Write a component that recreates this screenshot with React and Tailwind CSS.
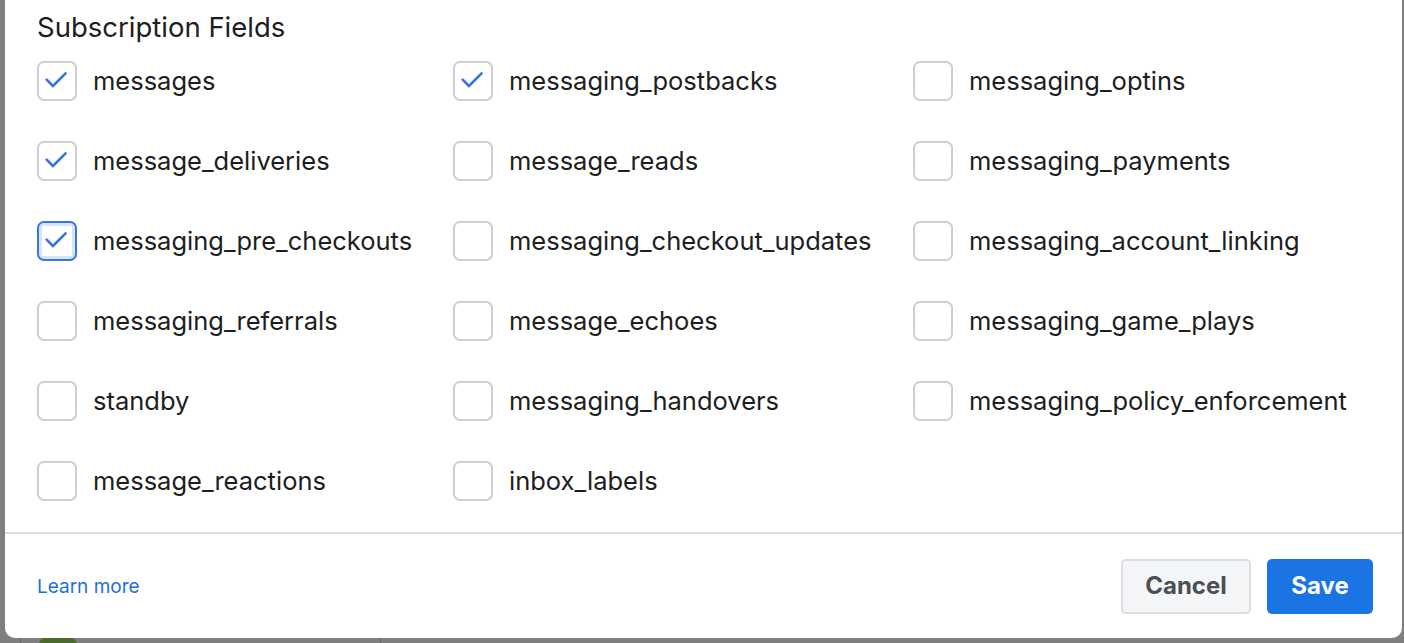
import React from 'react'

const rows = [
  [['messages', true], ['messaging_postbacks', true], ['messaging_optins', false]],
  [['message_deliveries', true], ['message_reads', false], ['messaging_payments', false]],
  [['messaging_pre_checkouts', true, true], ['messaging_checkout_updates', false], ['messaging_account_linking', false]],
  [['messaging_referrals', false], ['message_echoes', false], ['messaging_game_plays', false]],
  [['standby', false], ['messaging_handovers', false], ['messaging_policy_enforcement', false]],
  [['message_reactions', false], ['inbox_labels', false], null],
]

function Check({ checked, focused }) {
  return (
    <div
      className={
        'w-[40px] h-[40px] shrink-0 rounded-[7px] border-2 bg-white flex items-center justify-center ' +
        (focused ? 'border-[#3578e5] shadow-[inset_0_0_0_3px_#d8e4f8]' : 'border-[#ccd0d5]')
      }
    >
      {checked && (
        <svg width="40" height="40" viewBox="0 0 40 40" fill="none">
          <path d="M8.5 18.5 L15.5 25.5 L29.5 11.5" stroke="#3578e5" strokeWidth="3" strokeLinecap="round" strokeLinejoin="round" />
        </svg>
      )}
    </div>
  )
}

export default function App() {
  return (
    <div className="w-[1404px] h-[643px] bg-[#7f7f7f] overflow-hidden flex flex-col" style={{ fontFamily: 'Inter, "Liberation Sans", sans-serif' }}>
      <div className="ml-[5px] w-[1397px] h-[638px] shrink-0 bg-white rounded-b-[10px] flex flex-col">
        <div className="pl-[32px] pt-[9px]">
          <div className="text-[27.5px] leading-[36px] text-[#1c1e21]">Subscription Fields</div>
          <div className="grid grid-cols-[416px_460px_auto] gap-y-[40px] mt-[16px]">
            {rows.map((row, i) =>
              row.map((cell, j) =>
                cell ? (
                  <div key={i + '-' + j} className="flex items-center gap-[16px] h-[40px]">
                    <Check checked={cell[1]} focused={cell[2]} />
                    <span className="text-[25.5px] text-[#1c1e21] whitespace-nowrap">{cell[0]}</span>
                  </div>
                ) : (
                  <div key={i + '-' + j} />
                )
              )
            )}
          </div>
        </div>
        <div className="mt-auto border-t-2 border-[#dadde1] h-[106px] flex items-center justify-between pl-[32px] pr-[29px]">
          <a className="text-[19px] text-[#216fdb] mt-[2px]">Learn more</a>
          <div className="flex gap-[16px]">
            <button className="h-[55px] w-[130px] rounded-[5px] border-2 border-[#dadde1] bg-[#f5f6f7] text-[24px] font-bold text-[#4b4f56]">Cancel</button>
            <button className="h-[55px] w-[106px] rounded-[5px] bg-[#1b74e4] text-[24px] font-bold text-white">Save</button>
          </div>
        </div>
      </div>
      <div className="h-[5px] overflow-hidden flex">
        <div className="flex items-center w-[360px] border-l border-[#6a6a6a] ml-[20px] mt-[-4px] h-[40px] shrink-0">
          <div className="w-[44px] h-[44px] rounded-full bg-[#4d6a2e] ml-[15px]" />
          <span className="ml-[15px] text-[24px] text-[#2a2a2a]">FruityBot</span>
        </div>
        <div className="flex items-center border-l border-[#6a6a6a] mt-[-4px] h-[40px] pl-[12px]">
          <span className="text-[24px] text-[#2a2a2a]">0 Fields</span>
        </div>
      </div>
    </div>
  )
}
